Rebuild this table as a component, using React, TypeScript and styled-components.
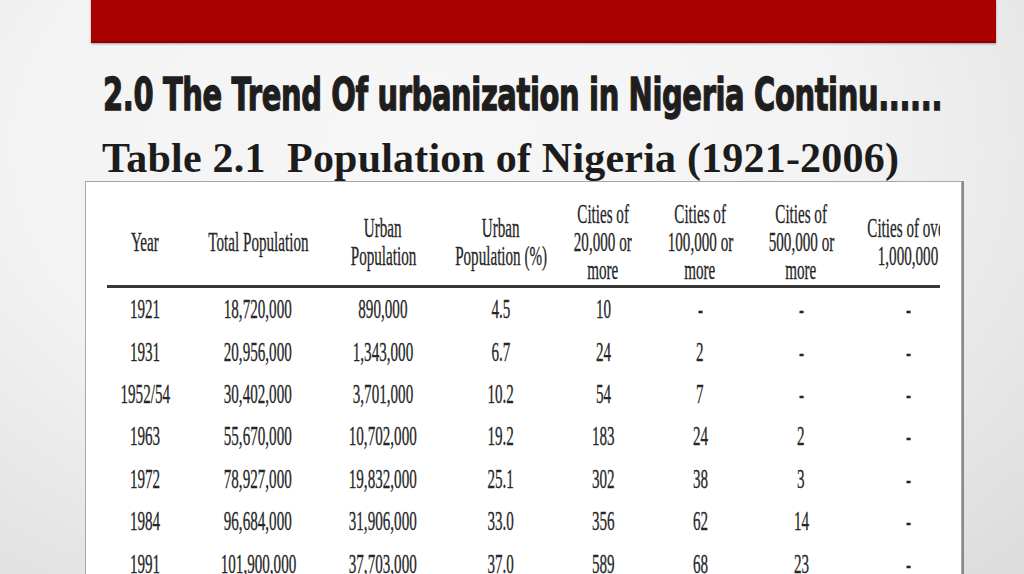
import React, { useLayoutEffect, useRef, useState } from "react";
import styled, { createGlobalStyle } from "styled-components";

const GlobalStyle = createGlobalStyle`
  html, body { margin: 0; padding: 0; }
  body { width: 1024px; height: 574px; overflow: hidden; background: #eeeeee; }
`;

const Slide = styled.div`
  width: 1024px;
  height: 574px;
  overflow: hidden;
  display: flex;
  flex-direction: column;
  background: radial-gradient(ellipse 80% 100% at 42% 26%, #f7f7f7 0%, #f3f3f3 50%, #dddddd 100%);
`;

const RedBar = styled.div`
  flex-shrink: 0;
  margin-left: 91px;
  width: 905px;
  height: 41px;
  background: #ab0000;
  border-bottom: 2px solid #8c0000;
  box-shadow: 0 1px 2px rgba(0, 0, 0, 0.35);
`;

const Title = styled.h1`
  flex-shrink: 0;
  align-self: flex-start;
  width: max-content;
  margin: 29.8px 0 0 103px;
  font-family: "DejaVu Sans", "Liberation Sans", sans-serif;
  font-weight: 700;
  font-size: 44px;
  line-height: 44px;
  white-space: nowrap;
  color: #1e1e1e;
  -webkit-text-stroke: 1.3px #1e1e1e;
  transform-origin: left center;
  letter-spacing: -0.5px;
  text-shadow: 1px 1px 1px rgba(0, 0, 0, 0.15);
`;

const Subtitle = styled.h2`
  flex-shrink: 0;
  margin: 20px 0 0 102px;
  font-family: "Liberation Serif", "Times New Roman", serif;
  font-weight: 700;
  font-size: 42px;
  line-height: 42px;
  letter-spacing: 0.2px;
  white-space: pre;
  color: #1c1c1c;
`;

const Card = styled.div`
  box-sizing: border-box;
  flex: 1;
  margin: 2.2px 0 0 85px;
  width: 877px;
  background: #ffffff;
  border: 1px solid #a8a8a8;
  border-bottom: none;
  box-shadow: 2px 0 0 #8a8a8a;
  padding-left: 21px;
`;

const Inner = styled.div`
  width: 833px;
  height: 100%;
  overflow: hidden;
`;

const Grid = styled.div<{ $header?: boolean }>`
  display: grid;
  grid-template-columns: 76px 150px 100px 136px 68px 126px 76px 138px;
  align-items: center;
  height: ${(p) => (p.$header ? "86px" : "42.4px")};
  padding-top: ${(p) => (p.$header ? "17px" : "0")};
`;

const Rule = styled.div`
  height: 3px;
  background: #383838;
  width: 833px;
`;

const Cell = styled.div`
  min-width: 0;
  display: flex;
  flex-direction: column;
  align-items: center;
  justify-content: center;
`;

const Line = styled.span`
  display: block;
  white-space: nowrap;
  font-family: "Liberation Serif", "Times New Roman", serif;
  font-size: 27px;
  line-height: 28px;
  color: #262626;
  -webkit-text-stroke: 0.3px #262626;
  transform: scaleX(0.56);
  transform-origin: center;
`;

function FitTitle({ children, width }: { children: React.ReactNode; width: number }) {
  const ref = useRef<HTMLHeadingElement>(null);
  const [scale, setScale] = useState(0.57);
  useLayoutEffect(() => {
    const el = ref.current;
    if (!el) return;
    const natural = el.scrollWidth;
    if (natural) setScale(width / natural);
  }, [width]);
  return (
    <Title ref={ref} style={{ transform: `scaleX(${scale})` }}>
      {children}
    </Title>
  );
}

const headers: string[][] = [
  ["Year"],
  ["Total Population"],
  ["Urban", "Population"],
  ["Urban", "Population (%)"],
  ["Cities of", "20,000 or", "more"],
  ["Cities of", "100,000 or", "more"],
  ["Cities of", "500,000 or", "more"],
  ["Cities of over", "1,000,000"],
];

const rows: string[][] = [
  ["1921", "18,720,000", "890,000", "4.5", "10", "-", "-", "-"],
  ["1931", "20,956,000", "1,343,000", "6.7", "24", "2", "-", "-"],
  ["1952/54", "30,402,000", "3,701,000", "10.2", "54", "7", "-", "-"],
  ["1963", "55,670,000", "10,702,000", "19.2", "183", "24", "2", "-"],
  ["1972", "78,927,000", "19,832,000", "25.1", "302", "38", "3", "-"],
  ["1984", "96,684,000", "31,906,000", "33.0", "356", "62", "14", "-"],
  ["1991", "101,900,000", "37,703,000", "37.0", "589", "68", "23", "-"],
];

export default function App() {
  return (
    <>
      <GlobalStyle />
      <Slide>
        <RedBar />
        <FitTitle width={839}>2.0 The Trend Of urbanization in Nigeria Continu......</FitTitle>
        <Subtitle>{"Table 2.1  Population of Nigeria (1921-2006)"}</Subtitle>
        <Card>
          <Inner>
            <Grid $header>
              {headers.map((h, i) => (
                <Cell key={i}>
                  {h.map((l, j) => (
                    <Line key={j}>{l}</Line>
                  ))}
                </Cell>
              ))}
            </Grid>
            <Rule />
            {rows.map((r, i) => (
              <Grid key={i}>
                {r.map((v, j) => (
                  <Cell key={j}>
                    <Line>{v}</Line>
                  </Cell>
                ))}
              </Grid>
            ))}
          </Inner>
        </Card>
      </Slide>
    </>
  );
}
